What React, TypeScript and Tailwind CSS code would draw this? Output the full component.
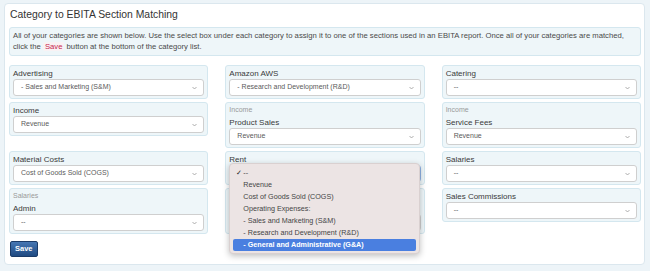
import React from 'react';

type Item = { group?: string; label: string; value: string; open?: boolean };

const items: Item[] = [
  { label: 'Advertising', value: '- Sales and Marketing (S&M)' },
  { label: 'Amazon AWS', value: '- Research and Development (R&D)' },
  { label: 'Catering', value: '--' },
  { label: 'Income', value: 'Revenue' },
  { group: 'Income', label: 'Product Sales', value: 'Revenue' },
  { group: 'Income', label: 'Service Fees', value: 'Revenue' },
  { label: 'Material Costs', value: 'Cost of Goods Sold (COGS)' },
  { label: 'Rent', value: '--', open: true },
  { label: 'Salaries', value: '--' },
  { group: 'Salaries', label: 'Admin', value: '--' },
  { group: 'Salaries', label: 'Engineering', value: '--' },
  { label: 'Sales Commissions', value: '--' },
];

const options = [
  '--',
  'Revenue',
  'Cost of Goods Sold (COGS)',
  'Operating Expenses:',
  '- Sales and Marketing (S&M)',
  '- Research and Development (R&D)',
  '- General and Administrative (G&A)',
];

function Chevron() {
  return (
    <svg width="5" height="4" viewBox="0 0 5 4" className="shrink-0">
      <polyline points="0.5,1 2.5,3 4.5,1" fill="none" stroke="#9a9a9a" strokeWidth="0.8" />
    </svg>
  );
}

function SelectMenu() {
  return (
    <div className="absolute left-[3px] top-[11px] z-10 w-[191px] rounded-[4px] border border-[#d9d0d0] bg-[#ece4e4] pt-[3px] pb-[2px] shadow-[0_2px_6px_rgba(0,0,0,0.25)]">
      {options.map((o, i) => {
        const active = i === options.length - 1;
        return (
          <div
            key={o}
            className={`relative mx-[3px] h-[12px] rounded-[2px] pl-[10px] text-[7.2px] leading-[12px] ${
              active ? 'bg-[#4a7fe0] font-semibold text-white' : 'text-[#444]'
            }`}
          >
            {i === 0 && <span className="absolute left-[3px] top-0 text-[7px] text-[#222]">✓</span>}
            {o}
          </div>
        );
      })}
    </div>
  );
}

function Card({ item }: { item: Item }) {
  return (
    <div className="relative rounded-[3px] border border-[#d4e7ef] bg-[#eef6f9] px-[3px] pt-[2px] pb-[2px]">
      {item.group && (
        <div className="text-[7px] leading-[10px] text-[#9a9a9a]">{item.group}</div>
      )}
      <div className={`text-[8px] font-normal leading-[11px] text-[#3a3a3a] ${item.group ? 'mt-[2px]' : ''}`}>
        {item.label}
      </div>
      <div
        className={`flex h-[17px] items-center justify-between rounded-[3px] border bg-white pl-[7px] pr-[6px] ${
          item.open ? 'border-[#8fb3e6]' : 'border-[#cfcfcf]'
        }`}
      >
        <span className="text-[7px] text-[#5a5a5a]">{item.value}</span>
        <Chevron />
      </div>
      {item.open && <SelectMenu />}
    </div>
  );
}

export default function App() {
  return (
    <div className="min-h-[271px] bg-[#edf4f8] pt-[3px] pl-[4px] pr-[5px] pb-[5px] font-['Liberation_Sans',Arial,sans-serif]">
      <div className="rounded-[4px] border border-[#dbe7ee] bg-white pt-[4px] pl-[4px] pr-[3px] pb-[6px]">
        <h1 className="pl-[1px] text-[10.4px] leading-[14px] text-[#333]">Category to EBITA Section Matching</h1>
        <div className="mt-[5px] rounded-[3px] border border-[#d4e7ef] bg-[#eef6f9] px-[3px] pt-[2px] pb-[3px] text-[7.7px] leading-[11px] text-[#4a4a4a]">
          All of your categories are shown below. Use the select box under each category to assign it to one of
          the sections used in an EBITA report. Once all of your categories are matched,
          <br />
          click the{' '}
          <span className="rounded-[2px] bg-[#f9f2f4] px-[2px] text-[#c7254e]">Save</span> button at the bottom of
          the category list.
        </div>
        <div className="mt-[9px] grid grid-cols-3 items-start gap-x-[17px] gap-y-[3px]">
          {items.map((it, i) => (
            <Card key={i} item={it} />
          ))}
        </div>
        <button className="mt-[4px] ml-[1px] h-[16px] rounded-[2px] border border-[#1b3b68] bg-gradient-to-b from-[#4677b3] to-[#1f4a82] px-[4px] text-[7.5px] font-bold text-white">
          Save
        </button>
      </div>
    </div>
  );
}
